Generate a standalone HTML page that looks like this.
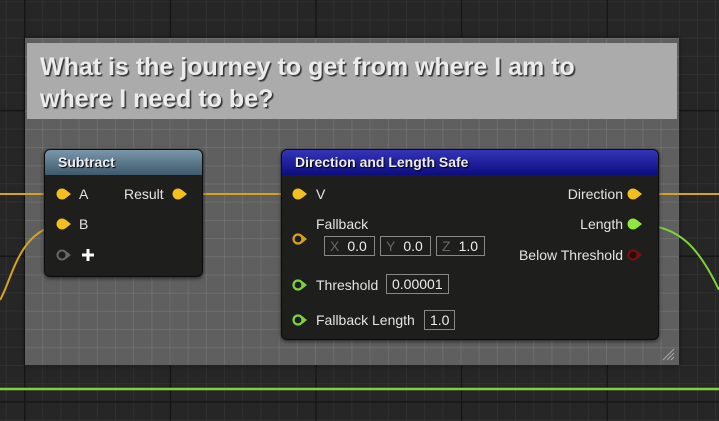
<!DOCTYPE html>
<html><head><style>
html,body{margin:0;padding:0}
body{width:719px;height:421px;overflow:hidden;position:relative;background:#262626;font-family:"Liberation Sans",sans-serif;
background-image:
linear-gradient(90deg,#161616 1.5px,transparent 1.5px),
linear-gradient(0deg,#161616 1.5px,transparent 1.5px),
linear-gradient(90deg,#303030 1px,transparent 1px),
linear-gradient(0deg,#303030 1px,transparent 1px);
background-size:145.6px 145.6px,145.6px 145.6px,18.2px 18.2px,18.2px 18.2px;
background-position:24px 0,0 111.4px,24px 0,0 111.4px;}
.abs{position:absolute}
#comment{left:25px;top:38px;width:654px;height:327px;background:#5f5f5f;
background-image:linear-gradient(90deg,rgba(255,255,255,0.09) 1px,transparent 1px),linear-gradient(0deg,rgba(255,255,255,0.09) 1px,transparent 1px);
background-size:18.2px 18.2px;background-position:-1px 0,0 1px;box-shadow:0 0 4px rgba(0,0,0,.6)}
#chead{left:27px;top:43px;width:650px;height:76px;background:#ababab;color:#ececec;font-weight:bold;font-size:25px;line-height:32px;
text-shadow:1.5px 1.5px 1px #333;padding:8px 0 0 13px;box-sizing:border-box}
.node{background:#1e1f1d;border:1px solid #0c0c0c;border-radius:6px;box-shadow:0 1px 4px rgba(0,0,0,.7);overflow:hidden;color:#e0e0e0;font-size:13px}
.hd{height:25px;line-height:24px;font-weight:bold;font-size:14px;color:#eee;padding-left:13px;text-shadow:1px 1px 1px #000}
.t{position:absolute;font-size:14px;color:#e4e4e4;white-space:nowrap}
.box{position:absolute;border:1px solid #888;height:20px;line-height:19px;font-size:14px;color:#eee;box-sizing:border-box;padding:0 5px}
.box i{font-style:normal;color:#666;margin-right:8px}
</style></head><body>
<div id="comment" class="abs"></div>
<div id="chead" class="abs">What is the journey to get from where I am to<br>where I need to be?</div>
<svg class="abs" style="left:0;top:0" width="719" height="421">
<path d="M0 194 H60" stroke="#d9a318" stroke-width="2" fill="none"/>
<path d="M186 194 H292" stroke="#d9a318" stroke-width="2" fill="none"/>
<path d="M640 194 H719" stroke="#d9a318" stroke-width="2" fill="none"/>
<path d="M0 300 C12 280 18 232 58 225" stroke="#d9a318" stroke-width="2" fill="none"/>
<path d="M640 225 C680 225 700 250 719 290" stroke="#7fd33a" stroke-width="2" fill="none"/>
<path d="M0 389 H719" stroke="#7fd33a" stroke-width="2.5" fill="none"/>
</svg>
<svg class="abs" style="left:661px;top:347px" width="14" height="14"><path d="M2 13 L13 2 M6 13 L13 6 M10 13 L13 10" stroke="#aaa" stroke-width="1"/></svg>

<div class="node abs" style="left:44px;top:149px;width:157px;height:126px">
<div class="hd" style="background:linear-gradient(#7a96aa,#3f5a6c)">Subtract</div>
</div>
<svg class="abs" style="left:54px;top:185px" width="140" height="80">
<g fill="#f2bf1c"><circle cx="8" cy="9" r="5.5"/><path d="M12 5 L17 9 L12 13Z"/>
<circle cx="8" cy="39" r="5.5"/><path d="M12 35 L17 39 L12 43Z"/>
<circle cx="124" cy="9" r="5.5"/><path d="M128 5 L133 9 L128 13Z"/></g>
<circle cx="8" cy="70" r="4.5" fill="none" stroke="#666" stroke-width="2"/><path d="M12 66 L17 70 L12 74Z" fill="#666"/>
<path d="M34 64 V76 M28 70 H40" stroke="#fff" stroke-width="3"/>
</svg>
<div class="t" style="left:79px;top:186px">A</div>
<div class="t" style="left:79px;top:216px">B</div>
<div class="t" style="left:124px;top:186px">Result</div>

<div class="node abs" style="left:281px;top:149px;width:376px;height:189px">
<div class="hd" style="background:linear-gradient(#3434b8,#0d0d80)">Direction and Length Safe</div>
</div>
<svg class="abs" style="left:288px;top:185px" width="360" height="145">
<g fill="#f2bf1c"><circle cx="10" cy="9" r="5.5"/><path d="M14 5 L19 9 L14 13Z"/>
<circle cx="345" cy="9" r="5.5"/><path d="M349 5 L354 9 L349 13Z"/></g>
<circle cx="10" cy="54" r="4.5" fill="none" stroke="#d9a318" stroke-width="2.2"/><path d="M14 50 L19 54 L14 58Z" fill="#d9a318"/>
<circle cx="345" cy="39" r="5.5" fill="#8ee63e"/><path d="M349 35 L354 39 L349 43Z" fill="#8ee63e"/>
<circle cx="345" cy="70" r="4.5" fill="#2a0a0a" stroke="#7a1010" stroke-width="2"/><path d="M349 66 L354 70 L349 74Z" fill="#7a1010"/>
<circle cx="10" cy="100" r="4.5" fill="none" stroke="#7fd33a" stroke-width="2.2"/><path d="M14 96 L19 100 L14 104Z" fill="#7fd33a"/>
<circle cx="10" cy="135" r="4.5" fill="none" stroke="#7fd33a" stroke-width="2.2"/><path d="M14 131 L19 135 L14 139Z" fill="#7fd33a"/>
</svg>
<div class="t" style="left:316px;top:186px">V</div>
<div class="t" style="left:316px;top:216px">Fallback</div>
<div class="box" style="left:324px;top:236px;width:51px"><i>X</i>0.0</div>
<div class="box" style="left:380px;top:236px;width:51px"><i>Y</i>0.0</div>
<div class="box" style="left:436px;top:236px;width:49px"><i>Z</i>1.0</div>
<div class="t" style="left:316px;top:277px">Threshold</div>
<div class="box" style="left:386px;top:274px;width:63px">0.00001</div>
<div class="t" style="left:316px;top:312px">Fallback Length</div>
<div class="box" style="left:424px;top:310px;width:31px">1.0</div>
<div class="t" style="right:96px;top:186px">Direction</div>
<div class="t" style="right:96px;top:216px">Length</div>
<div class="t" style="right:96px;top:247px">Below Threshold</div>
</body></html>
